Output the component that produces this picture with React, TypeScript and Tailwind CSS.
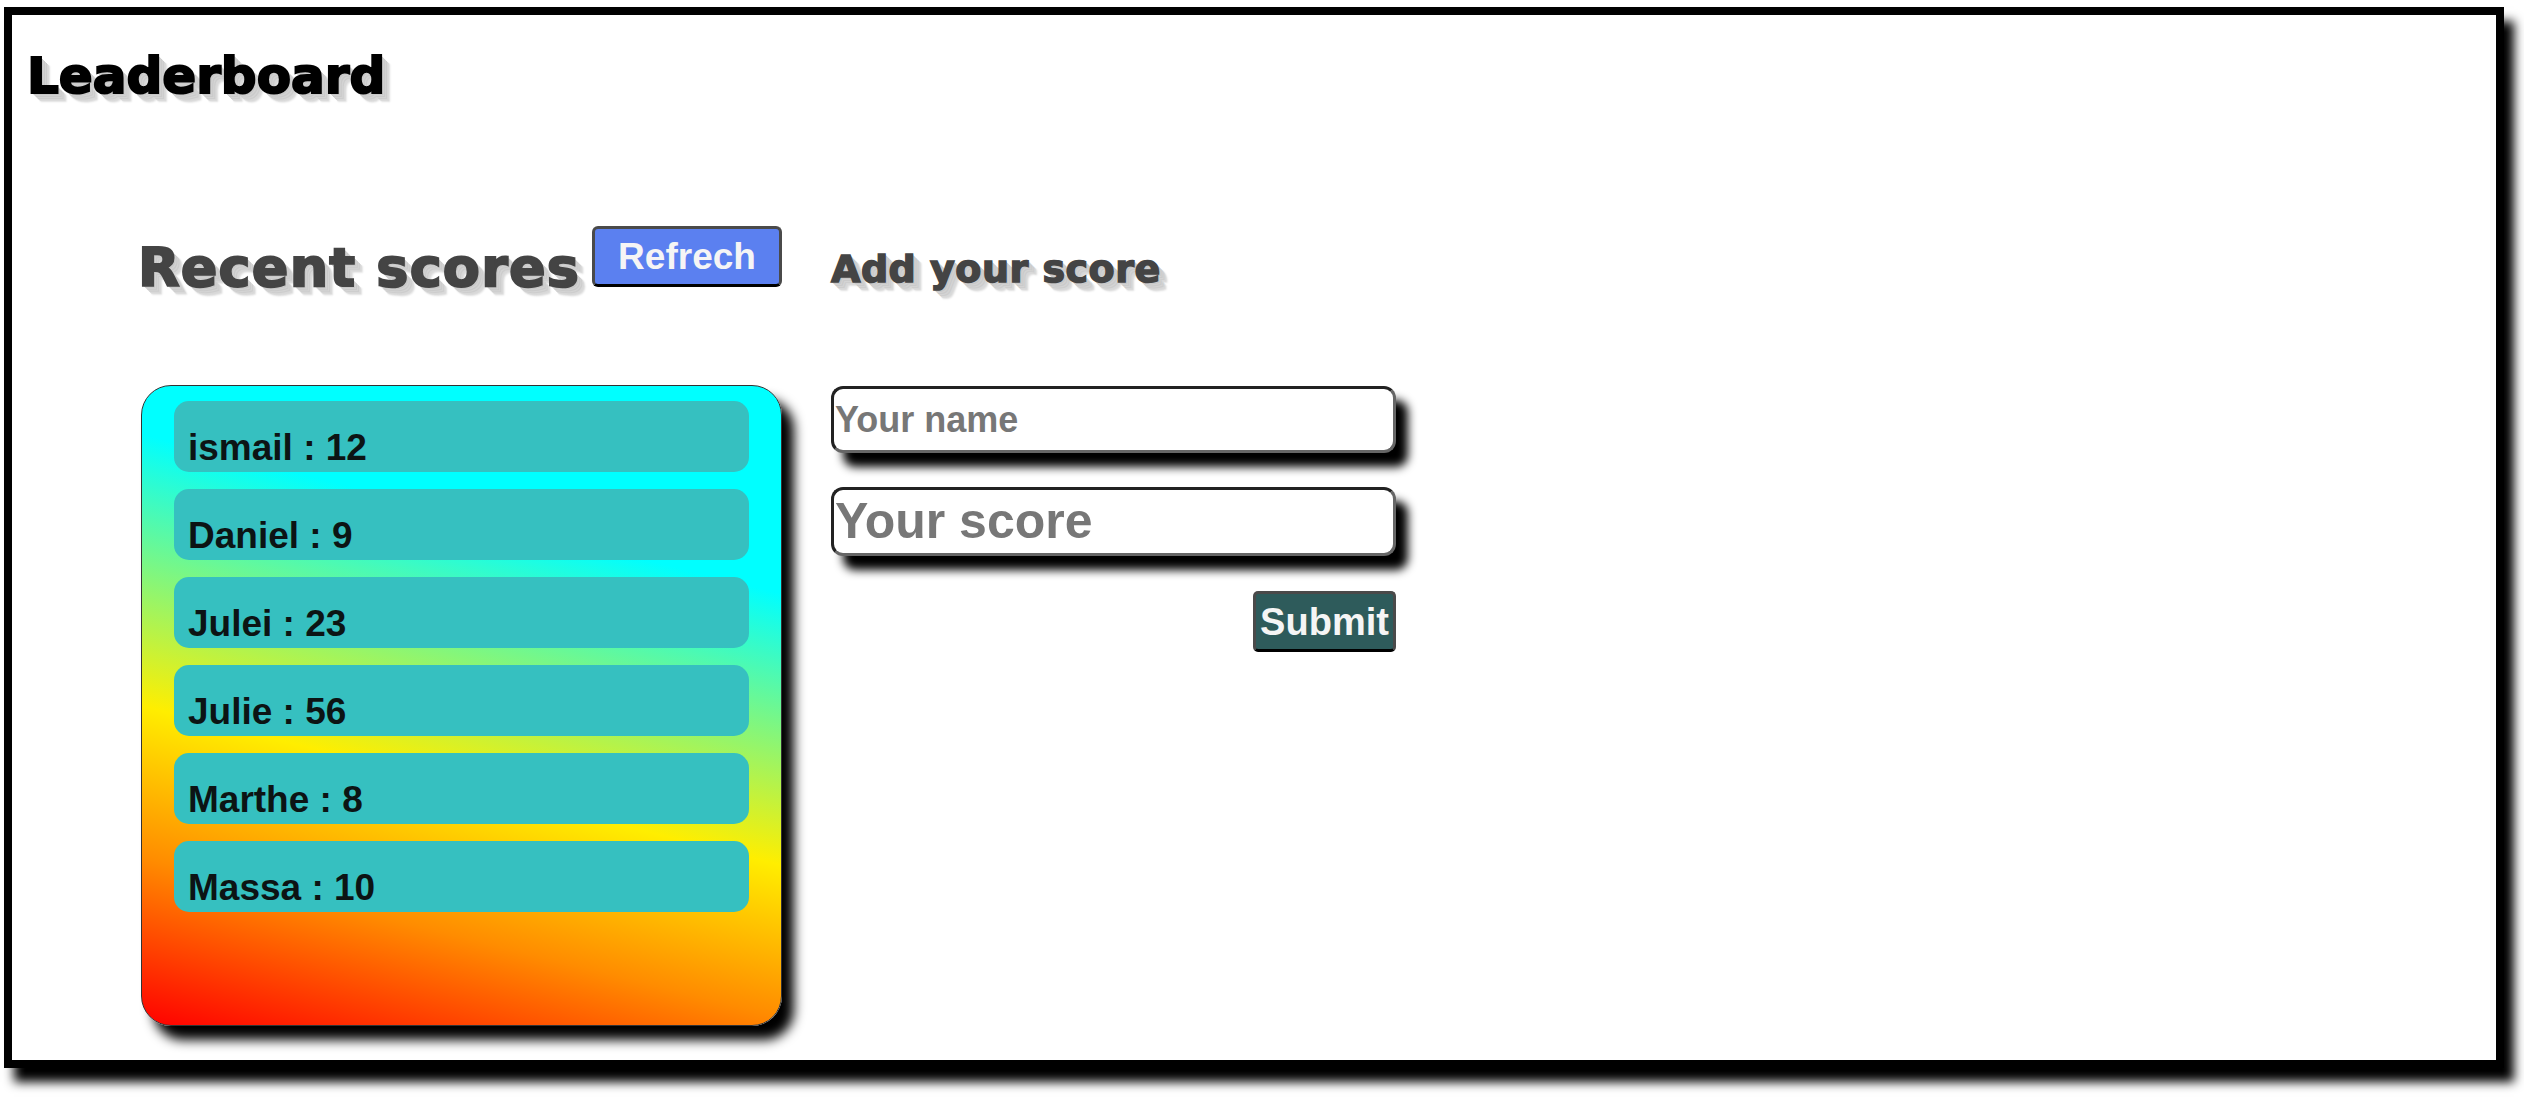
import { useState } from 'react';

const SCORES = [
  { name: 'ismail', score: 12 },
  { name: 'Daniel', score: 9 },
  { name: 'Julei', score: 23 },
  { name: 'Julie', score: 56 },
  { name: 'Marthe', score: 8 },
  { name: 'Massa', score: 10 },
];

// layered grey shadow gives the "3D" heading look
const heading3d =
  "font-['DejaVu_Sans',sans-serif] font-bold [text-shadow:1px_1px_0_#cfcfcf,2px_2px_0_#c8c8c8,3px_3px_0_#d2d2d2,4px_4px_0_#cacaca,5px_5px_0_#d4d4d4,6px_6px_0_#cdcdcd,7px_7px_0_#d8d8d8,8px_8px_1px_#dadada,9px_9px_2px_#e2e2e2]";

export default function App() {
  const [name, setName] = useState('');
  const [score, setScore] = useState('');

  return (
    <div className="min-h-[1098px] bg-white pl-[4px] pt-[7px]">
      <div className="h-[1061px] w-[2500px] border-8 border-black bg-white shadow-[10px_14px_10px_black]">
        <h1 className={`ml-[15px] mt-[36px] text-[50px] leading-[50px] text-black [-webkit-text-stroke:2px_black] ${heading3d}`}>
          Leaderboard
        </h1>

        <div className="ml-[129px] mt-[125px] flex gap-[49px]">
          {/* left column: recent scores */}
          <div className="flex w-[641px] flex-col">
            <div className="flex h-[68px] items-start">
              <h2 className={`-ml-[3px] mt-[15px] text-[54px] leading-[54px] tracking-[1.2px] text-[#444] [-webkit-text-stroke:2px_#444] ${heading3d}`}>
                Recent scores
              </h2>
              <button className="ml-auto h-[61px] w-[190px] rounded-[6px] border-[3px] border-[#4a4a4a] border-b-black bg-[#5b80f0] font-['Liberation_Sans',Arial,sans-serif] text-[37px] font-bold leading-none text-[#f5f5f5]">
                Refrech
              </button>
            </div>

            <div className="mt-[91px] h-[641px] w-[641px] rounded-[30px] border border-[#333] bg-[linear-gradient(14deg,#ff0000_0%,#ff8c00_21%,#ffee00_40%,#00ffff_74%)] px-[32px] pt-[15px] shadow-[12px_14px_12px_black]">
              <ul className="flex flex-col gap-[17px]">
                {SCORES.map((s) => (
                  <li key={s.name} className="h-[71px] rounded-[15px] bg-[#36c0c0] pl-[14px] pt-[28px] font-['Liberation_Sans',Arial,sans-serif] text-[37px] font-bold leading-[37px] text-[#0c1414]">
                    {s.name} : {s.score}
                  </li>
                ))}
              </ul>
            </div>
          </div>

          {/* right column: add score form */}
          <form className="flex w-[565px] flex-col" onSubmit={(e) => e.preventDefault()}>
            <h3 className={`mt-[24px] h-[38px] text-[38px] leading-[38px] tracking-[0.5px] text-[#444] [-webkit-text-stroke:1.5px_#444] ${heading3d}`}>
              Add your score
            </h3>
            <input
              value={name}
              onChange={(e) => setName(e.target.value)}
              placeholder="Your name"
              className="mt-[98px] h-[67px] w-full rounded-[12px] border-[3px] border-t-[#222] border-l-[#222] border-r-[#666] border-b-[#666] bg-white px-[1px] font-['Liberation_Sans',Arial,sans-serif] text-[36px] font-bold text-black shadow-[12px_14px_10px_black] outline-none placeholder:text-[#777]"
            />
            <input
              value={score}
              onChange={(e) => setScore(e.target.value)}
              placeholder="Your score"
              className="mt-[34px] h-[69px] w-full rounded-[12px] border-[3px] border-t-[#222] border-l-[#222] border-r-[#666] border-b-[#666] bg-white px-[1px] font-['Liberation_Sans',Arial,sans-serif] text-[50px] font-bold text-black shadow-[12px_14px_10px_black] outline-none placeholder:text-[#777]"
            />
            <button
              type="submit"
              className="mt-[35px] h-[61px] w-[143px] self-end rounded-[5px] border-[3px] border-[#4a4a4a] border-b-black bg-[#2e5b5b] font-['Liberation_Sans',Arial,sans-serif] text-[38px] font-bold leading-none text-[#f5f5f5]"
            >
              Submit
            </button>
          </form>
        </div>
      </div>
    </div>
  );
}
